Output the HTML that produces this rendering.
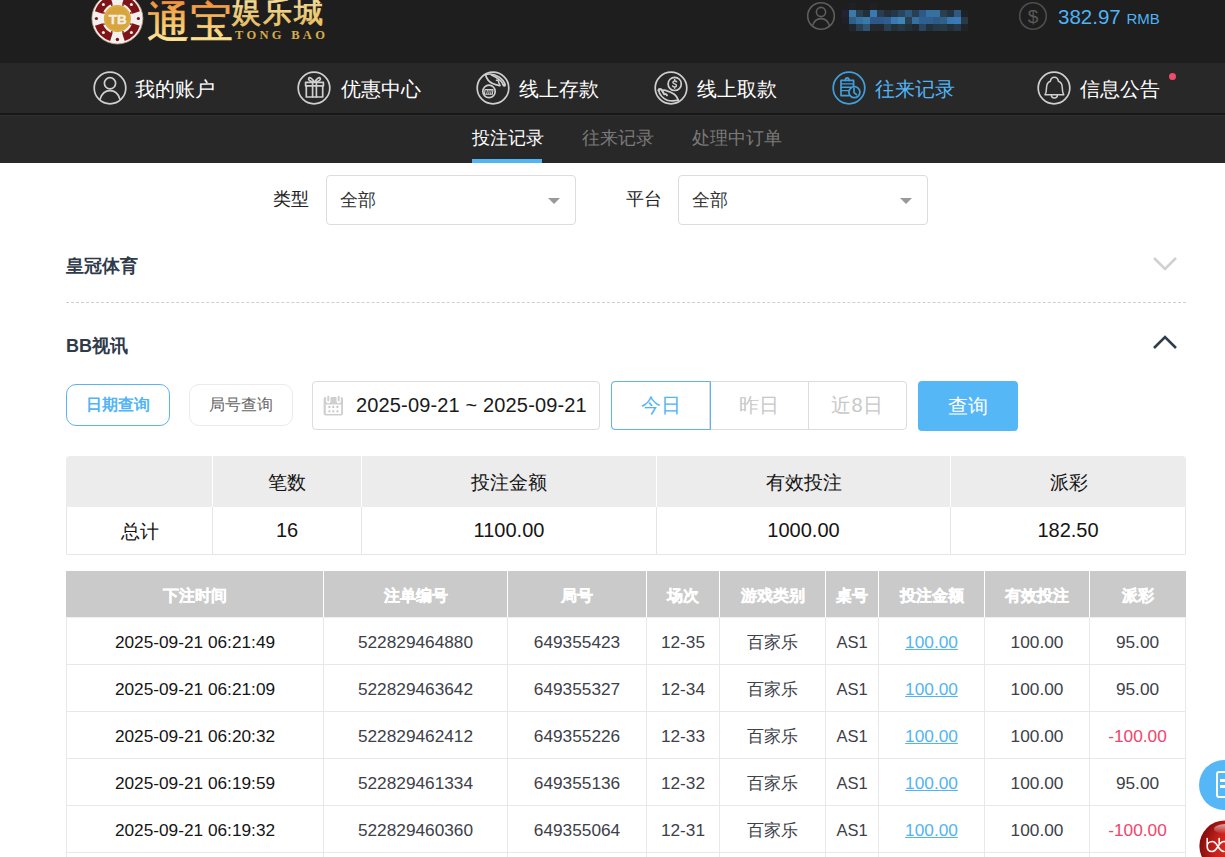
<!DOCTYPE html>
<html><head><meta charset="utf-8">
<style>
*{box-sizing:border-box;margin:0;padding:0}
html,body{width:1225px;height:857px;overflow:hidden;background:#fff;font-family:"Liberation Sans",sans-serif;color:#222}
.abs{position:absolute}
#hdr{position:absolute;left:0;top:0;width:1225px;height:63px;background:#1e1e1e}
#nav{position:absolute;left:0;top:63px;width:1225px;height:50px;background:#282828}
#sep{position:absolute;left:0;top:113px;width:1225px;height:3px;background:#171717;border-bottom:1px solid #303030}
#sub{position:absolute;left:0;top:116px;width:1225px;height:47px;background:#282828}
.nv{position:absolute;top:0;height:50px;line-height:50px;font-size:20px;color:#fff;white-space:nowrap}
.nv svg{position:absolute;left:-0.5px;top:8px}
.nv span{position:absolute;top:1px}
.tab{position:absolute;top:0;height:48px;line-height:46px;font-size:18px;color:#7a7a7a;white-space:nowrap}
.lbl{position:absolute;font-size:18px;color:#222;line-height:50px;top:173.5px}
.sel{position:absolute;top:175px;width:250px;height:50px;border:1px solid #dcdcdc;border-radius:4px;font-size:18px;line-height:48px;padding-left:13px;color:#333}
.sel i{position:absolute;right:15px;top:22px;width:0;height:0;border-left:6px solid transparent;border-right:6px solid transparent;border-top:6px solid #999}
.sec{position:absolute;left:66px;font-size:18px;font-weight:bold;color:#2f3a4a}
table{border-collapse:separate;border-spacing:0;position:absolute;table-layout:fixed}
#sumw{position:absolute;left:66px;top:456px;width:1120px;height:99px;border-radius:4px 4px 2px 2px;overflow:hidden}
#sum{left:0;top:0;width:1120px}
#sum th{background:#ececec;height:51px;font-size:18.5px;font-weight:normal;color:#151515;text-align:center;border-left:1px solid #fff;padding-top:1px}
#sum th:first-child{border-left:none}
#sum td{height:48px;text-align:center;font-size:20px;color:#151515;border-left:1px solid #e6e6e6;border-bottom:1px solid #e6e6e6}
#sum td:last-child{border-right:1px solid #e6e6e6}
#det{left:66px;top:570px;width:1120px}
#det th{background:#cacaca;color:#fff;font-size:16px;font-weight:bold;-webkit-text-stroke:0.35px #fff;height:48px;padding-top:5px;border-top:1px solid #fff;border-right:1px solid #fff;border-bottom:1px solid #efefef;text-align:center}
#det th:last-child{border-right:none}
#det td{border-right:1px solid #e8e8e8;border-bottom:1px solid #e8e8e8;text-align:center;font-size:17.25px;color:#3d4148;height:47px;padding-top:3px}
#det td:first-child{border-left:1px solid #e8e8e8;color:#151515}
#det td.c{font-size:16.5px}
#det td a{color:#52b4f6;text-decoration:underline}
.neg{color:#f2446c!important}
</style></head><body>

<div id="hdr"></div>
<div id="nav"></div>
<div id="sep"></div>
<svg class="abs" style="left:88px;top:-10px" width="245" height="60" viewBox="0 0 245 60">
<defs>
<linearGradient id="gold" x1="0" y1="0" x2="0" y2="1"><stop offset="0" stop-color="#f08a3a"/><stop offset="0.45" stop-color="#f5c060"/><stop offset="1" stop-color="#fff2a8"/></linearGradient>
<linearGradient id="gold2" x1="0" y1="0" x2="0" y2="1"><stop offset="0" stop-color="#f5e0a0"/><stop offset="1" stop-color="#e8c060"/></linearGradient>
<radialGradient id="coin" cx="0.45" cy="0.4" r="0.6"><stop offset="0" stop-color="#e6b458"/><stop offset="1" stop-color="#c58a2e"/></radialGradient>
</defs>
<g transform="translate(29.4,28.5)">
<circle r="25.5" fill="#f4f0ee" stroke="#b89a80" stroke-width="0.8"/>
<g fill="#7e1418"><path d="M7.29 -22.44 A23.6 23.6 0 0 1 22.44 -7.29 L14.84 -4.82 A15.6 15.6 0 0 0 4.82 -14.84 Z"/><path d="M22.44 7.29 A23.6 23.6 0 0 1 7.29 22.44 L4.82 14.84 A15.6 15.6 0 0 0 14.84 4.82 Z"/><path d="M-7.29 22.44 A23.6 23.6 0 0 1 -22.44 7.29 L-14.84 4.82 A15.6 15.6 0 0 0 -4.82 14.84 Z"/><path d="M-22.44 -7.29 A23.6 23.6 0 0 1 -7.29 -22.44 L-4.82 -14.84 A15.6 15.6 0 0 0 -14.84 -4.82 Z"/>
<circle cx="0" cy="-21" r="1.5"/><circle cx="0" cy="21" r="1.7"/><circle cx="-21" cy="0" r="1.6"/><circle cx="21" cy="0" r="1.6"/>
<circle cx="5.59" cy="-13.49" r="0.9"/><circle cx="13.49" cy="-5.59" r="0.9"/><circle cx="13.49" cy="5.59" r="0.9"/><circle cx="5.59" cy="13.49" r="0.9"/><circle cx="-5.59" cy="13.49" r="0.9"/><circle cx="-13.49" cy="5.59" r="0.9"/><circle cx="-13.49" cy="-5.59" r="0.9"/><circle cx="-5.59" cy="-13.49" r="0.9"/>
</g>
<circle cx="14.00" cy="-14.00" r="1.5" fill="#f4f0ee"/><circle cx="14.00" cy="14.00" r="1.5" fill="#f4f0ee"/><circle cx="-14.00" cy="14.00" r="1.5" fill="#f4f0ee"/><circle cx="-14.00" cy="-14.00" r="1.5" fill="#f4f0ee"/>
<circle r="13.5" fill="#d7a53c"/>
<circle r="12.2" fill="none" stroke="#e6b850" stroke-width="0.8" opacity="0.6"/>
<text x="0.3" y="5" text-anchor="middle" font-family="Liberation Sans" font-weight="bold" font-size="13.5" fill="#f2eee6" stroke="#f2eee6" stroke-width="0.4">TB</text>
</g>
<text x="59" y="47" font-family="Liberation Serif" font-size="43" fill="url(#gold)" stroke="url(#gold)" stroke-width="0.6">通宝</text>
<text x="144" y="31.5" font-family="Liberation Serif" font-size="29" letter-spacing="2" fill="url(#gold2)" stroke="url(#gold2)" stroke-width="0.8">娱乐城</text>
<text x="147" y="49" font-family="Liberation Serif" font-weight="bold" font-size="12.5" letter-spacing="3.3" fill="#d8ac48">TONG BAO</text>
</svg>
<svg class="abs" style="left:806px;top:1px" width="30" height="30" viewBox="0 0 30 30"><g fill="none" stroke="#5e5e5e" stroke-width="1.6"><circle cx="15" cy="15" r="13.3"/><circle cx="15" cy="11" r="4.6"/><path d="M6.3 25.3 C8 19.5 11.5 17.6 15 17.6 C18.5 17.6 22 19.5 23.7 25.3"/></g></svg>
<svg class="abs" style="left:842px;top:3px" width="126" height="28" viewBox="0 0 126 28"><rect x="7" y="0" width="7" height="7" fill="#1e2226"/><rect x="28" y="0" width="7" height="7" fill="#1e2226"/><rect x="0" y="7" width="7" height="7" fill="#222230"/><rect x="7" y="7" width="7" height="7" fill="#3a7aaa"/><rect x="14" y="7" width="7" height="7" fill="#2a4050"/><rect x="21" y="7" width="7" height="7" fill="#22303a"/><rect x="28" y="7" width="7" height="7" fill="#3a78b0"/><rect x="35" y="7" width="7" height="7" fill="#2a3d50"/><rect x="42" y="7" width="7" height="7" fill="#22303a"/><rect x="49" y="7" width="7" height="7" fill="#243848"/><rect x="56" y="7" width="7" height="7" fill="#2a4560"/><rect x="63" y="7" width="7" height="7" fill="#2f5a80"/><rect x="70" y="7" width="7" height="7" fill="#28404f"/><rect x="77" y="7" width="7" height="7" fill="#2f5888"/><rect x="84" y="7" width="7" height="7" fill="#3570a0"/><rect x="91" y="7" width="7" height="7" fill="#3570a0"/><rect x="98" y="7" width="7" height="7" fill="#2a4050"/><rect x="105" y="7" width="7" height="7" fill="#243340"/><rect x="112" y="7" width="7" height="7" fill="#2f5a80"/><rect x="119" y="7" width="7" height="7" fill="#1e2226"/><rect x="0" y="14" width="7" height="7" fill="#20202a"/><rect x="7" y="14" width="7" height="7" fill="#2f6088"/><rect x="14" y="14" width="7" height="7" fill="#3570a0"/><rect x="21" y="14" width="7" height="7" fill="#3a7aa8"/><rect x="28" y="14" width="7" height="7" fill="#2f5888"/><rect x="35" y="14" width="7" height="7" fill="#2f5888"/><rect x="42" y="14" width="7" height="7" fill="#305d90"/><rect x="49" y="14" width="7" height="7" fill="#3a7ab0"/><rect x="56" y="14" width="7" height="7" fill="#3f85b8"/><rect x="63" y="14" width="7" height="7" fill="#2a4050"/><rect x="70" y="14" width="7" height="7" fill="#3570a0"/><rect x="77" y="14" width="7" height="7" fill="#306090"/><rect x="84" y="14" width="7" height="7" fill="#306090"/><rect x="91" y="14" width="7" height="7" fill="#2f5a85"/><rect x="98" y="14" width="7" height="7" fill="#2f6085"/><rect x="105" y="14" width="7" height="7" fill="#3878b0"/><rect x="112" y="14" width="7" height="7" fill="#3a78b8"/><rect x="119" y="14" width="7" height="7" fill="#283a45"/><rect x="7" y="21" width="7" height="7" fill="#20282e"/><rect x="14" y="21" width="7" height="7" fill="#284050"/><rect x="21" y="21" width="7" height="7" fill="#2f5570"/><rect x="28" y="21" width="7" height="7" fill="#222a30"/><rect x="35" y="21" width="7" height="7" fill="#22282c"/><rect x="42" y="21" width="7" height="7" fill="#28404f"/><rect x="49" y="21" width="7" height="7" fill="#22303a"/><rect x="56" y="21" width="7" height="7" fill="#263848"/><rect x="63" y="21" width="7" height="7" fill="#223038"/><rect x="70" y="21" width="7" height="7" fill="#22282e"/><rect x="77" y="21" width="7" height="7" fill="#2a4560"/><rect x="84" y="21" width="7" height="7" fill="#22303a"/><rect x="91" y="21" width="7" height="7" fill="#263848"/><rect x="98" y="21" width="7" height="7" fill="#263a48"/><rect x="105" y="21" width="7" height="7" fill="#22303a"/><rect x="112" y="21" width="7" height="7" fill="#263848"/><rect x="119" y="21" width="7" height="7" fill="#202428"/></svg>
<svg class="abs" style="left:1018px;top:1px" width="30" height="30" viewBox="0 0 30 30"><g fill="none" stroke="#4e4e4e" stroke-width="1.6"><circle cx="15" cy="15" r="13.3"/></g><text x="15" y="21.5" text-anchor="middle" font-family="Liberation Sans" font-size="19" fill="#5a5a5a">$</text></svg>
<div class="abs" style="left:1058px;top:3px;font-size:20.5px;line-height:28px;color:#4fb3f5;white-space:nowrap">382.97 <span style="font-size:15px">RMB</span></div>

<div id="sub"></div>

<!-- sub tabs -->
<div class="abs" style="left:0;top:115px;width:1225px;height:48px">
  <div class="tab" style="left:472px;color:#fff">投注记录</div>
  <div class="abs" style="left:472px;top:44px;width:70px;height:4px;background:#4fb5f5"></div>
  <div class="tab" style="left:582px">往来记录</div>
  <div class="tab" style="left:692px">处理中订单</div>
</div>

<!-- nav items -->
<div class="abs" style="left:0;top:63px;width:1225px;height:50px">
  <div class="nv" style="left:93px"><svg width="34" height="34" viewBox="0 0 34 34"><g fill="none" stroke="#cfcfcf" stroke-width="1.7" stroke-linecap="round" stroke-linejoin="round"><circle cx="17" cy="17" r="15.8"/><circle cx="17" cy="12.3" r="5.6"/><path d="M7 28.2 C9 21.8 12.8 19.6 17 19.6 C21.2 19.6 25 21.8 27 28.2"/></g></svg><span style="left:42px">我的账户</span></div>
  <div class="nv" style="left:297px"><svg width="34" height="34" viewBox="0 0 34 34"><g fill="none" stroke="#cfcfcf" stroke-width="1.7" stroke-linecap="round" stroke-linejoin="round"><circle cx="17" cy="17" r="15.8"/><rect x="8.6" y="11.4" width="17.8" height="3.4"/><path d="M9.3 14.8 V26 H25.7 V14.8"/><path d="M15.6 11.4 V26 M19.4 11.4 V26"/><path d="M17.5 11.2 C15.5 7.5 12.8 6 11.8 7.1 C10.9 8.2 12.5 10.6 17.5 11.2 C22.5 10.6 24.1 8.2 23.2 7.1 C22.2 6 19.5 7.5 17.5 11.2"/></g></svg><span style="left:44px">优惠中心</span></div>
  <div class="nv" style="left:476px"><svg width="34" height="34" viewBox="0 0 34 34"><g fill="none" stroke="#cfcfcf" stroke-width="1.7" stroke-linecap="round" stroke-linejoin="round"><circle cx="17" cy="17" r="15.8"/><circle cx="13" cy="20.4" r="6.2"/><path d="M9 18.6 H17 L16.3 23.3 H8.4 Z" stroke-width="1.1"/><path d="M10.6 22.8 L11.6 19 M12.7 22.8 L13.2 19 M14.6 22.8 L15.2 19" stroke-width="0.9"/><path d="M9 3.8 C13 2.4 19 3.5 23 6 C26 8 28.5 11 29.2 14.2 C28.6 15.4 27.4 15 27 13.6"/><path d="M9.7 4.2 C10.5 7.5 12.5 10.5 16.6 12.5 C19 13.7 21.5 14.2 23.7 14.6"/><path d="M15.5 4 C18.5 5.2 22 7.2 25 10.2 C26 11.3 26.6 12.3 27 13.4"/><path d="M20.5 9.3 C21.8 9 22.8 10 22.6 11.3 L24 14.5" stroke-width="1.5"/></g></svg><span style="left:43px">线上存款</span></div>
  <div class="nv" style="left:654px"><svg width="34" height="34" viewBox="0 0 34 34"><g fill="none" stroke="#cfcfcf" stroke-width="1.7" stroke-linecap="round" stroke-linejoin="round"><circle cx="17" cy="17" r="15.8"/><circle cx="20.7" cy="12.9" r="6.6"/><path d="M22.6 10.8 C22 9.6 19 9.6 18.9 11.4 C18.8 13.1 22.6 12.6 22.5 14.6 C22.4 16.4 19 16.3 18.6 15 M20.7 8.6 V9.6 M20.7 16.3 V17.3" stroke-width="1.5"/><path d="M4.6 19.4 C5.5 23.3 8.5 27 12.7 29 C16 30.3 20 30.2 24.4 29.2"/><path d="M8.2 19.6 C9.3 19.1 10.5 19.1 11.5 19.4 C14.5 20.3 18 21.6 20.3 23.3 C22 24.6 23.5 26.6 24.4 29.2"/><path d="M4.6 19.4 C4.6 17.8 7.2 17.6 8.2 19.6 L9.6 22.3" stroke-width="2.2"/><path d="M10.3 23.3 C11.2 22.7 12.6 23.2 13 24.3" stroke-width="2"/></g></svg><span style="left:43px">线上取款</span></div>
  <div class="nv" style="left:832px;color:#52b4f6"><svg width="34" height="34" viewBox="0 0 34 34"><g fill="none" stroke="#429fdc" stroke-width="1.7" stroke-linecap="round" stroke-linejoin="round"><circle cx="17" cy="17" r="15.8"/><path d="M21.6 15.6 V9.4 H9 V24.6 H16.8"/><path d="M13.4 9.4 C13.4 6 17 6 17 9.4"/><path d="M9.3 12.9 H20.5 M9.3 16.2 H19 M9.3 19.6 H16.5" stroke-width="1.4"/><circle cx="22.4" cy="21.2" r="5.5"/><path d="M22 17.6 V21.6 L24.5 23.7"/></g></svg><span style="left:43px">往来记录</span></div>
  <div class="nv" style="left:1037px"><svg width="34" height="34" viewBox="0 0 34 34"><g fill="none" stroke="#cfcfcf" stroke-width="1.7" stroke-linecap="round" stroke-linejoin="round"><circle cx="17" cy="17" r="15.8"/><path d="M8 23.8 H26.8 C25.6 21.8 25.3 19.5 25.3 17 C25.3 13.2 23.8 11 21.4 10.2 C21 7.6 19.5 6.2 17.4 6.2 C15.3 6.2 13.8 7.6 13.4 10.2 C11 11 9.5 13.2 9.5 17 C9.5 19.5 9.2 21.8 8 23.8 Z" stroke-width="1.5"/><path d="M14.4 24 C14.4 28 20.4 28 20.4 24" stroke-width="1.5"/></g></svg><span style="left:43px">信息公告</span></div>
  <div class="abs" style="left:1169px;top:10px;width:7px;height:7px;border-radius:50%;background:#f04a6e"></div>
</div>

<!-- filters -->
<div class="lbl" style="left:273px">类型</div>
<div class="sel" style="left:326px">全部<i></i></div>
<div class="lbl" style="left:626px">平台</div>
<div class="sel" style="left:678px">全部<i></i></div>

<div class="sec" style="top:254px">皇冠体育</div>
<div class="abs" style="left:66px;top:302px;width:1120px;border-top:1px dashed #cfcfcf"></div>
<div class="sec" style="top:334px">BB视讯</div>

<!-- summary -->
<div id="sumw"><table id="sum">
<colgroup><col style="width:146px"><col style="width:149px"><col style="width:295px"><col style="width:294px"><col style="width:236px"></colgroup>
<tr><th></th><th>笔数</th><th>投注金额</th><th>有效投注</th><th>派彩</th></tr>
<tr><td style="font-size:18.5px;padding-top:1px">总计</td><td>16</td><td>1100.00</td><td>1000.00</td><td>182.50</td></tr>
</table></div>

<!-- detail -->
<table id="det">
<colgroup><col style="width:258px"><col style="width:184px"><col style="width:139px"><col style="width:73px"><col style="width:106px"><col style="width:53px"><col style="width:106px"><col style="width:105px"><col style="width:96px"></colgroup>
<tr><th>下注时间</th><th>注单编号</th><th>局号</th><th>场次</th><th>游戏类别</th><th>桌号</th><th>投注金额</th><th>有效投注</th><th>派彩</th></tr>
<tr><td>2025-09-21 06:21:49</td><td>522829464880</td><td>649355423</td><td>12-35</td><td class="c">百家乐</td><td class="c">AS1</td><td><a>100.00</a></td><td>100.00</td><td>95.00</td></tr>
<tr><td>2025-09-21 06:21:09</td><td>522829463642</td><td>649355327</td><td>12-34</td><td class="c">百家乐</td><td class="c">AS1</td><td><a>100.00</a></td><td>100.00</td><td>95.00</td></tr>
<tr><td>2025-09-21 06:20:32</td><td>522829462412</td><td>649355226</td><td>12-33</td><td class="c">百家乐</td><td class="c">AS1</td><td><a>100.00</a></td><td>100.00</td><td class="neg">-100.00</td></tr>
<tr><td>2025-09-21 06:19:59</td><td>522829461334</td><td>649355136</td><td>12-32</td><td class="c">百家乐</td><td class="c">AS1</td><td><a>100.00</a></td><td>100.00</td><td>95.00</td></tr>
<tr><td>2025-09-21 06:19:32</td><td>522829460360</td><td>649355064</td><td>12-31</td><td class="c">百家乐</td><td class="c">AS1</td><td><a>100.00</a></td><td>100.00</td><td class="neg">-100.00</td></tr>
<tr><td>2025-09-21 06:18:55</td><td>522829459322</td><td>649354975</td><td>12-30</td><td class="c">百家乐</td><td class="c">AS1</td><td><a>100.00</a></td><td>100.00</td><td>95.00</td></tr>
</table>


<!-- section chevrons -->
<svg class="abs" style="left:1152px;top:255px" width="26" height="17" viewBox="0 0 26 17"><path d="M2 3 L13 14 L24 3" fill="none" stroke="#d0d0d0" stroke-width="2.6"/></svg>
<svg class="abs" style="left:1152px;top:334px" width="26" height="17" viewBox="0 0 26 17"><path d="M2 14 L13 3 L24 14" fill="none" stroke="#2f3d4f" stroke-width="2.6"/></svg>

<!-- query type buttons -->
<div class="abs" style="left:66px;top:384px;width:104px;height:42px;border:1px solid #5ab4f0;border-radius:10px;color:#52b4f6;font-size:16px;font-weight:bold;text-align:center;line-height:40px">日期查询</div>
<div class="abs" style="left:189px;top:384px;width:104px;height:42px;border:1px solid #ebebeb;border-radius:10px;color:#666;font-size:16px;text-align:center;line-height:40px">局号查询</div>

<!-- date picker -->
<div class="abs" style="left:312px;top:381px;width:288px;height:49px;border:1px solid #dcdcdc;border-radius:4px">
  <svg class="abs" style="left:10px;top:13px" width="22" height="22" viewBox="0 0 22 22">
    <rect x="0.6" y="2.1" width="19.4" height="18.3" rx="2" fill="#cfcfcf"/>
    <rect x="2.8" y="9.5" width="15.3" height="9.4" fill="#fff"/>
    <rect x="3.1" y="0" width="4.4" height="8.2" rx="2.2" fill="#fff"/><rect x="13.5" y="0" width="4.4" height="8.2" rx="2.2" fill="#fff"/>
    <rect x="4.3" y="0.8" width="2" height="5.8" rx="1" fill="#cfcfcf"/><rect x="14.7" y="0.8" width="2" height="5.8" rx="1" fill="#cfcfcf"/>
    <g fill="#c6c6c6"><circle cx="6.4" cy="12" r="1.15"/><circle cx="10.3" cy="12" r="1.15"/><circle cx="14.4" cy="12" r="1.15"/><circle cx="6.4" cy="16.3" r="1.15"/><circle cx="10.3" cy="16.3" r="1.15"/><circle cx="14.4" cy="16.3" r="1.15"/></g>
  </svg>
  <div class="abs" style="left:43px;top:0;line-height:47px;font-size:20px;letter-spacing:0.15px;color:#1a1a1a;white-space:nowrap">2025-09-21 ~ 2025-09-21</div>
</div>

<!-- day group -->
<div class="abs" style="left:611px;top:381px;width:296px;height:49px;border:1px solid #dcdcdc;border-radius:4px"></div>
<div class="abs" style="left:709px;top:381px;width:1px;height:49px;background:#dcdcdc"></div>
<div class="abs" style="left:808px;top:381px;width:1px;height:49px;background:#dcdcdc"></div>
<div class="abs" style="left:611px;top:381px;width:100px;height:49px;border:1px solid #5ab4f0;border-radius:4px 0 0 4px;color:#52b4f6;font-size:20px;text-align:center;line-height:47px">今日</div>
<div class="abs" style="left:710px;top:381px;width:98px;height:49px;color:#c8c8c8;font-size:20px;text-align:center;line-height:49px">昨日</div>
<div class="abs" style="left:808px;top:381px;width:98px;height:49px;color:#c8c8c8;font-size:20px;text-align:center;line-height:49px">近8日</div>
<div class="abs" style="left:918px;top:381px;width:100px;height:50px;background:#56b7f7;border-radius:4px;color:#fff;font-size:20px;text-align:center;line-height:50px">查询</div>

<!-- floating -->
<div class="abs" style="left:1199px;top:760px;width:50px;height:50px;border-radius:50%;background:#56b7f7"></div>
<div class="abs" style="left:1216px;top:771px;width:20px;height:27px;border:2.5px solid #fff;border-radius:3px"></div>
<div class="abs" style="left:1220px;top:779px;width:8px;height:2.5px;background:#fff"></div>
<div class="abs" style="left:1220px;top:785px;width:8px;height:2.5px;background:#fff"></div>
<svg class="abs" style="left:1199px;top:820px" width="26" height="37" viewBox="0 0 26 37">
<defs><radialGradient id="rb" cx="0.85" cy="0.6" r="0.9"><stop offset="0" stop-color="#e4382c"/><stop offset="0.6" stop-color="#c8221c"/><stop offset="1" stop-color="#7a0a0a"/></radialGradient>
<linearGradient id="hl" x1="0" y1="0" x2="0" y2="1"><stop offset="0" stop-color="#fff" stop-opacity="0.6"/><stop offset="1" stop-color="#fff" stop-opacity="0"/></linearGradient></defs>
<circle cx="26" cy="26" r="25.6" fill="url(#rb)"/>
<ellipse cx="27" cy="9" rx="12" ry="5" fill="url(#hl)"/>
<path d="M8.2 18.6 V26.5 C8.2 30 10.5 31.5 13.3 31.5 C16 31.5 17.5 29 19 26.5 C20.5 24 22 21.5 25 21.5 C28 21.5 30 24 30 26.5 M19 26.5 C17.5 24 16 21.5 13.3 21.5 C10.5 21.5 8.2 23.5 8.2 26 M19 26.5 C20.5 29 22 31.5 25 31.5 M20.2 18.6 V24" fill="none" stroke="#fff" stroke-width="1.6" stroke-linecap="round"/>
</svg>
</body></html>
